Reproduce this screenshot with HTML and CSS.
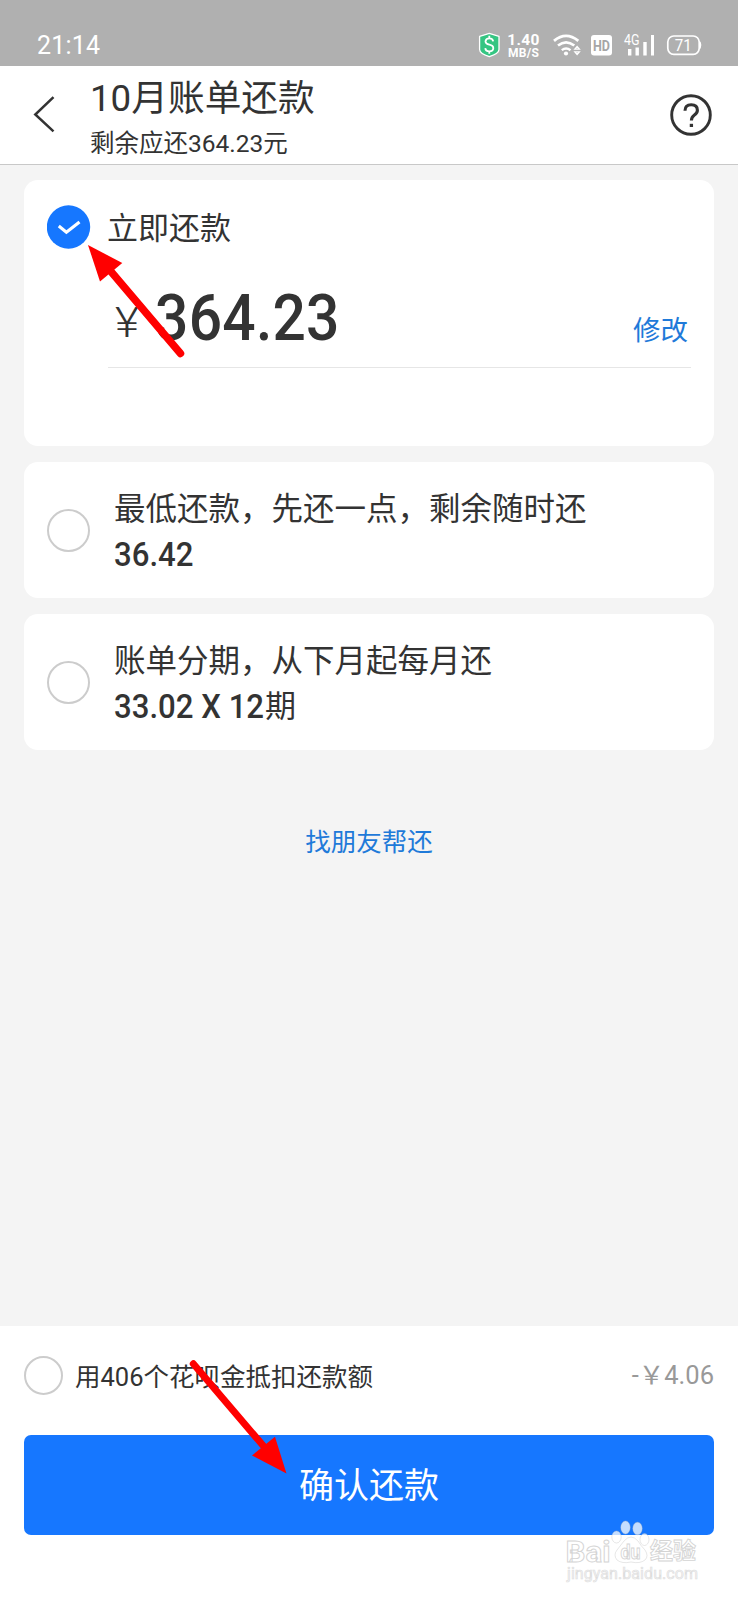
FILE: index.html
```html
<!DOCTYPE html>
<html lang="zh-CN">
<head>
<meta charset="utf-8">
<title>10月账单还款</title>
<link rel="stylesheet" href="styles.css">
</head>
<body>
<div class="screen">
  <div class="status">
    <span class="clock">21:14</span>
    <svg class="status-icons" width="228" height="32" viewBox="476 30 228 32">
      <path d="M489.300 33.400l9.700 3v13q0 4-9.700 7.200q-9.700-3.200-9.700-7.200v-13z" fill="#35c582" stroke="#fff" stroke-width="1.300" stroke-linejoin="round"/>
      <path d="M493.200 41.300q-.4-3-3.900-3t-3.800 3q0 2.600 3.900 3.400t3.900 3.500q-.2 3.100-4 3.100t-4-3.200M489.300 35.700v2.600M489.300 51v2.700" fill="none" stroke="#fff" stroke-width="1.800"/>
      <text class="rate" x="507.300" y="45" textLength="32">1.40</text>
      <text class="unit" x="508" y="57" textLength="31">MB/S</text>
      <g fill="none" stroke="#fff">
        <path d="M554 40.800q12-9.800 24.300 0" stroke-width="2.800"/>
        <path d="M558 45.600q8-6.600 16.300 0" stroke-width="2.600"/>
        <path d="M561.800 50.200q4.300-3.600 8.700 0" stroke-width="2.400"/>
      </g>
      <circle cx="566" cy="53.500" r="2.100" fill="#fff"/>
      <path d="M574.800 49.200l2.300-2.700 2.300 2.700zM574.800 51.800l2.300 2.700 2.300-2.700z" fill="none" stroke="#fff" stroke-width="1.300"/>
      <rect x="591" y="35" width="21" height="20.500" rx="3" fill="#fff"/>
      <text class="hd" x="593" y="50.800" textLength="17" lengthAdjust="spacingAndGlyphs">HD</text>
      <text class="net" x="624" y="45" textLength="15.500" lengthAdjust="spacingAndGlyphs">4G</text>
      <path d="M628 49h3.400v6.400H628zM635.500 47.500h3.400v7.900h-3.400zM643.300 42h3.400v13.400h-3.400zM651 35h3v20.400h-3z" fill="#fff"/>
      <rect x="667.800" y="36" width="31.400" height="18.300" rx="6" fill="none" stroke="#fff" stroke-width="1.700"/>
      <path d="M699.500 40.500q1.800 1.500 1.800 4.600t-1.800 4.600z" fill="#fff"/>
      <text class="battery" x="674.800" y="50.800" textLength="17" lengthAdjust="spacingAndGlyphs">71</text>
    </svg>
  </div>
  <header class="header">
    <svg class="back" width="24" height="38" viewBox="0 0 24 38"><path d="M21.500 2.200L3.300 19.500l18.200 16.800" fill="none" stroke="#333" stroke-width="2.500"/></svg>
    <div class="heading">
      <h1 class="title"><span class="month">10</span>月账单还款</h1>
      <p class="subtitle">剩余应还364.23元</p>
    </div>
    <svg class="help" width="42" height="42" viewBox="0 0 42 42" fill="none" stroke="#333">
      <circle cx="21" cy="21" r="19.300" stroke-width="2.900"/>
      <path d="M15 16.800q0-6 6.200-6t6.200 5.400q0 2.600-3 4.700t-3 5.700" stroke-width="3.100"/>
      <path d="M21.400 29.800v3.200" stroke-width="3.300"/>
    </svg>
  </header>
  <main class="options">
    <section class="card card-now">
      <div class="now-head">
        <svg class="checked" width="44" height="44" viewBox="0 0 44 44"><circle cx="21.500" cy="22" r="21.700" fill="#1677ff"/><path d="M11.800 21l7.600 6.300L32.500 17" fill="none" stroke="#fff" stroke-width="3.100"/></svg>
        <span class="now-title">立即还款</span>
      </div>
      <div class="amount-row">
        <span class="yen">¥</span>
        <span class="amount">364.23</span>
        <a class="edit">修改</a>
      </div>
    </section>
    <section class="card option">
      <span class="radio"></span>
      <div class="option-body">
        <div class="option-title">最低还款，先还一点，剩余随时还</div>
        <div class="option-value"><span class="num num-min">36.42</span></div>
      </div>
    </section>
    <section class="card option">
      <span class="radio"></span>
      <div class="option-body">
        <div class="option-title">账单分期，从下月起每月还</div>
        <div class="option-value"><span class="num num-plan">33.02 X 12</span>期</div>
      </div>
    </section>
    <a class="friend">找朋友帮还</a>
  </main>
  <footer class="footer">
    <div class="deduct">
      <span class="radio radio-small"></span>
      <span class="deduct-text">用406个花呗金抵扣还款额</span>
      <span class="deduct-value">-￥4.06</span>
    </div>
    <button class="confirm" type="button">确认还款</button>
  </footer>

  <svg class="arrow arrow-top" width="102" height="118" viewBox="86 242 102 118"><path d="M108 268L180.500 353.500" stroke="#f00" stroke-width="7.500" stroke-linecap="round"/><path d="M88 245l34.300 18-22.300 18.500z" fill="#f00"/></svg>
  <svg class="arrow arrow-bottom" width="102" height="118" viewBox="188 1358 102 118"><path d="M193.300 1363.800L266 1449" stroke="#f00" stroke-width="7" stroke-linecap="round"/><path d="M286.500 1473.500l-34.500-18 23-18.800z" fill="#f00"/></svg>
  <svg class="watermark" width="140" height="72" viewBox="562 1516 140 72">
    <g fill="#fff" fill-opacity=".75" stroke="#bbb" stroke-opacity=".45" stroke-width=".8">
      <ellipse cx="625.500" cy="1527.500" rx="4.700" ry="6.500"/>
      <ellipse cx="637.500" cy="1528.500" rx="4.700" ry="6.300"/>
      <ellipse cx="616.500" cy="1537" rx="4.700" ry="6"/>
      <ellipse cx="644.500" cy="1539.500" rx="4.500" ry="6"/>
      <path d="M624 1541q7-8 14 0q3 5 7 9q4 6 0 10q-5 4-14 2q-9 2-14-2q-4-5 0-10z"/>
    </g>
    <g class="mark-text">
      <text x="565.500" y="1561.500" font-size="29" textLength="45" lengthAdjust="spacingAndGlyphs">Bai</text>
      <text x="620.500" y="1559" font-size="20" textLength="20" lengthAdjust="spacingAndGlyphs">du</text>
      <text x="650" y="1559" font-size="23" textLength="46">经验</text>
      <text class="mark-url" x="567" y="1579" font-size="16" textLength="131">jingyan.baidu.com</text>
    </g>
  </svg>
</div>
</body>
</html>
```
FILE: styles.css
```css
* { box-sizing: border-box; }
body {
  margin: 0;
  background: #f4f4f4;
  color: #333;
  font-family: Roboto, "Noto Sans CJK SC", sans-serif;
}
.screen {
  position: relative;
  width: 738px;
  height: 1600px;
  display: flex;
  flex-direction: column;
  overflow: hidden;
}
.status {
  height: 66px;
  padding: 30px 34px 0 37px;
  display: flex;
  justify-content: space-between;
  background: #b0b0b0;
  color: #fff;
}
.clock { font-size: 25px; line-height: 31px; letter-spacing: .2px; }
.status-icons { font-family: Roboto, sans-serif; fill: #fff; }
.rate { font-size: 15.5px; font-weight: 700; }
.unit { font-size: 12px; font-weight: 700; }
.hd { font-size: 15.5px; font-weight: 700; fill: #a6a6a6; }
.net { font-size: 14px; }
.battery { font-size: 17px; }
.header {
  height: 99px;
  padding: 0 26px 0 32px;
  display: flex;
  align-items: flex-start;
  background: #fff;
  border-bottom: 1px solid #c8c8c8;
}
.back { margin-top: 29px; }
.heading { flex: 1; padding-left: 34px; }
.title {
  margin: 0;
  padding-top: 8px;
  font-size: 36.7px;
  line-height: 50px;
  font-weight: 400;
}
.subtitle { margin: 4px 0 0; font-size: 24.5px; line-height: 32px; }
.help { margin-top: 28px; }
.options {
  flex: 1;
  padding: 15px 24px 0;
  display: flex;
  flex-direction: column;
  gap: 16px;
}
.card { background: #fff; border-radius: 14px; }
.card-now { height: 266px; padding: 25px 23px 0; }
.now-head { display: flex; align-items: center; gap: 16px; height: 44px; }
.now-title { padding-top: 3px; font-size: 31px; line-height: 44px; }
.amount-row {
  display: flex;
  align-items: baseline;
  height: 119px;
  margin-left: 61px;
  padding: 34px 3px 0 7px;
  border-bottom: 1px solid #e6e6e6;
}
.yen {
  width: 40px;
  font-size: 43px;
  font-weight: 300;
  line-height: 70px;
  transform: translateY(-3px) scaleX(1.08);
  transform-origin: left;
}
.amount {
  width: 200px;
  font-size: 64.5px;
  font-weight: 500;
  line-height: 70px;
  letter-spacing: .3px;
  transform: scaleX(.91);
  transform-origin: left;
}
.edit { margin-left: auto; font-size: 27.5px; color: #1f7ad9; }
.option { height: 136px; padding: 25px 23px 0; display: flex; }
.radio {
  width: 43px;
  height: 43px;
  margin-top: 22px;
  border: 2px solid #ccc;
  border-radius: 50%;
  background: #fff;
}
.option-body { padding: 1px 0 0 24px; }
.option-title { font-size: 31.5px; line-height: 44px; }
.option-value { display: flex; font-size: 31px; line-height: 46px; }
.num {
  font-size: 33.5px;
  font-weight: 500;
  transform: scaleX(.93);
  transform-origin: left;
  white-space: nowrap;
}
.num-plan { width: 151px; }
.friend {
  align-self: center;
  margin-top: 58px;
  font-size: 25.5px;
  line-height: 36px;
  color: #1f7ad9;
}
.footer { height: 274px; padding: 29px 24px 0; background: #fff; }
.deduct { display: flex; align-items: center; height: 40px; font-size: 25.5px; }
.radio-small { width: 39px; height: 39px; margin: 0; }
.deduct-text { margin-left: 12px; transform: translateY(-1px); }
.deduct-value { margin-left: auto; color: #999; transform: translateY(-3px); }
.confirm {
  display: block;
  width: 100%;
  height: 100px;
  margin-top: 40px;
  padding: 4px 0 0;
  border: 0;
  border-radius: 7px;
  background: #1677ff;
  color: #fff;
  font: 400 35px/96px Roboto, "Noto Sans CJK SC", sans-serif;
}
.arrow, .watermark { position: absolute; }
.arrow-top { left: 86px; top: 242px; }
.arrow-bottom { left: 188px; top: 1358px; }
.watermark { left: 562px; top: 1516px; }
.mark-text {
  font-family: Roboto, "Noto Sans CJK SC", sans-serif;
  font-weight: 700;
  fill: #fff;
  stroke: #d4d4d4;
  stroke-width: .9px;
}
.mark-url { font-weight: 400; fill: #f4f4f4; stroke: #ddd; stroke-width: .6px; }
```
